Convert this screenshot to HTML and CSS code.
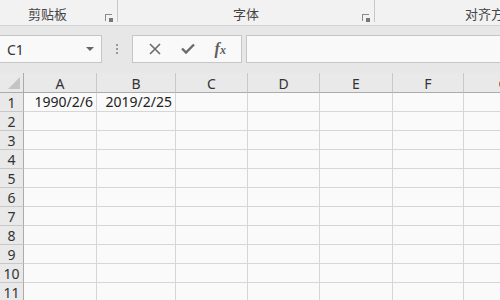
FILE: index.html
```html
<!DOCTYPE html>
<html lang="zh-CN">
<head>
  <meta charset="UTF-8">
  <title>Book1 - Excel</title>
  <link rel="stylesheet" href="styles.css">
</head>
<body>
  <!-- Ribbon group labels -->
  <div class="ribbon">
    <div class="group clip">
      <span class="group-label">剪贴板</span>
      <span class="launcher"></span>
    </div>
    <div class="group font">
      <span class="group-label">字体</span>
      <span class="launcher"></span>
    </div>
    <div class="group align">
      <span class="group-label">对齐方式</span>
    </div>
  </div>

  <!-- Name box + formula bar -->
  <div class="formula-bar">
    <div class="name-box">
      <span>C1</span>
      <span class="caret"></span>
    </div>
    <div class="grip"><i></i><i></i><i></i></div>
    <div class="fx-buttons">
      <svg width="14" height="14" viewBox="0 0 14 14"><path d="M2 2 L12 12 M12 2 L2 12" stroke="#6b6b6b" stroke-width="1.6" fill="none"/></svg>
      <svg width="16" height="14" viewBox="0 0 16 14"><path d="M2 6.5 L6 10.5 L14 2.5" stroke="#6b6b6b" stroke-width="2.4" fill="none"/></svg>
      <span class="fx">f<span class="x">x</span></span>
    </div>
    <div class="formula-input"></div>
  </div>

  <!-- Sheet grid -->
  <div class="sheet" id="sheet"></div>

  <script>
    const cols = ['A', 'B', 'C', 'D', 'E', 'F', 'G'];
    const data = { 'A1': '1990/2/6', 'B1': '2019/2/25' };
    const sheet = document.getElementById('sheet');

    // header row
    let html = '<div class="corner"><span class="tri"></span></div>';
    cols.forEach(c => { html += `<div class="col-head">${c}</div>`; });

    // rows
    for (let r = 1; r <= 11; r++) {
      html += `<div class="row-head">${r}</div>`;
      cols.forEach(c => {
        html += `<div class="cell">${data[c + r] || ''}</div>`;
      });
    }
    sheet.innerHTML = html;
  </script>
</body>
</html>
```

FILE: styles.css
```css
body {
  margin: 0;
  width: 500px;
  height: 300px;
  overflow: hidden;
  font-family: 'Noto Sans CJK SC', 'Liberation Sans', sans-serif;
  background: #e7e7e7;
}

.ribbon {
  display: flex;
  height: 25px;
  background: #f2f2f2;
  border-bottom: 1px solid #d2d2d2;
}

.group {
  position: relative;
  display: flex;
  justify-content: center;
  align-items: flex-end;
  height: 22px;
  border-right: 1px solid #c8c8c8;
  flex: none;
}

.group.clip { width: 118px; padding-right: 22px; box-sizing: border-box; }
.group.font { width: 256px; }
.group.align { width: 200px; border-right: none; justify-content: flex-start; padding-left: 90px; box-sizing: border-box; }

.group-label {
  font-size: 13px;
  line-height: 16px;
  color: #444;
}

.launcher {
  position: absolute;
  right: 5px;
  bottom: 1px;
  width: 6px;
  height: 6px;
  border-left: 1px solid #8a8a8a;
  border-top: 1px solid #8a8a8a;
}

.launcher::after {
  content: '';
  position: absolute;
  right: -1px;
  bottom: -1px;
  width: 4px;
  height: 4px;
  background: #777;
}

.formula-bar {
  display: flex;
  align-items: center;
  height: 47px;
  padding-bottom: 1px;
  box-sizing: border-box;
}

.name-box {
  display: flex;
  align-items: center;
  justify-content: space-between;
  width: 102px;
  height: 28px;
  box-sizing: border-box;
  padding: 0 7px 0 7px;
  background: #f9f9f9;
  border: 1px solid #c6c6c6;
  border-left: none;
  font-family: 'Noto Sans', sans-serif;
  font-size: 14px;
  color: #333;
}

.caret {
  width: 0;
  height: 0;
  border-left: 4px solid transparent;
  border-right: 4px solid transparent;
  border-top: 4px solid #666;
}

.grip {
  display: flex;
  flex-direction: column;
  gap: 2px;
  width: 30px;
  align-items: center;
}

.grip i {
  width: 2px;
  height: 2px;
  background: #999;
}

.fx-buttons {
  display: flex;
  align-items: center;
  justify-content: space-around;
  width: 110px;
  height: 28px;
  box-sizing: border-box;
  padding: 0 6px;
  background: #f9f9f9;
  border: 1px solid #c6c6c6;
}

.fx {
  font-family: 'Liberation Serif', serif;
  font-style: italic;
  font-weight: bold;
  font-size: 16px;
  color: #5e5e5e;
  line-height: 1;
}

.fx .x {
  font-size: 12px;
}

.formula-input {
  flex: 1;
  height: 28px;
  margin-left: 4px;
  box-sizing: border-box;
  background: #f9f9f9;
  border: 1px solid #c6c6c6;
  border-right: none;
}

.sheet {
  display: grid;
  grid-template-columns: 24px 73px 79px 72px 72px 73px 71px 80px;
  grid-template-rows: 20px;
  grid-auto-rows: 19px;
  background: #fafafa;
}

.corner,
.col-head,
.row-head {
  box-sizing: border-box;
  background: #e9e9e9;
  color: #333;
  font-family: 'Noto Sans', sans-serif;
  font-size: 14px;
  display: flex;
  align-items: center;
  justify-content: center;
}

.corner {
  border-right: 1px solid #ababab;
  border-bottom: 1px solid #ababab;
  position: relative;
}

.tri {
  position: absolute;
  right: 3px;
  bottom: 3px;
  width: 0;
  height: 0;
  border-left: 12px solid transparent;
  border-bottom: 12px solid #c4c4c4;
}

.col-head {
  border-right: 1px solid #c8c8c8;
  border-bottom: 1px solid #ababab;
  padding-top: 1px;
}

.row-head {
  border-right: 1px solid #ababab;
  border-bottom: 1px solid #c8c8c8;
}

.cell {
  box-sizing: border-box;
  border-right: 1px solid #d6d6d6;
  border-bottom: 1px solid #d6d6d6;
  font-family: 'Noto Sans', sans-serif;
  font-size: 14px;
  color: #222;
  text-align: right;
  padding-right: 3px;
  line-height: 18px;
  white-space: nowrap;
}
```
